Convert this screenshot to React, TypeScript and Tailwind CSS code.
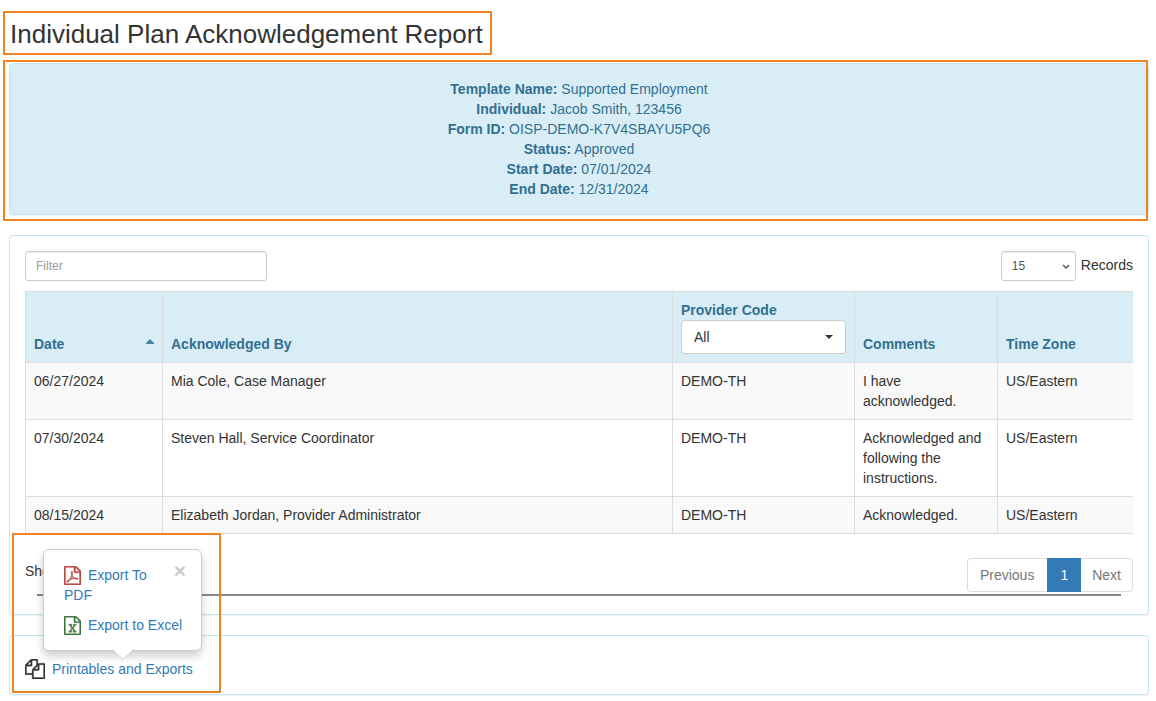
import type { ReactNode } from "react";

type Row = { date: string; by: string; code: string; comment: string; zone: string };

const rows: Row[] = [
  { date: "06/27/2024", by: "Mia Cole, Case Manager", code: "DEMO-TH", comment: "I have acknowledged.", zone: "US/Eastern" },
  {
    date: "07/30/2024",
    by: "Steven Hall, Service Coordinator",
    code: "DEMO-TH",
    comment: "Acknowledged and following the instructions.",
    zone: "US/Eastern",
  },
  { date: "08/15/2024", by: "Elizabeth Jordan, Provider Administrator", code: "DEMO-TH", comment: "Acknowledged.", zone: "US/Eastern" },
];

const details: [string, string][] = [
  ["Template Name:", "Supported Employment"],
  ["Individual:", "Jacob Smith, 123456"],
  ["Form ID:", "OISP-DEMO-K7V4SBAYU5PQ6"],
  ["Status:", "Approved"],
  ["Start Date:", "07/01/2024"],
  ["End Date:", "12/31/2024"],
];

const sheet =
  "M1596 380q28 28 48 76t20 88v1152q0 40-28 68t-68 28h-1344q-40 0-68-28t-28-68v-1600q0-40 28-68t68-28h896q40 0 88 20t76 48zm-444-244v376h376q-10-29-22-41l-313-313q-12-12-41-22zm384 1528v-1024h-416q-40 0-68-28t-28-68v-416h-768v1536h1280z";

const fileIcon = "-my-1 mr-[3px] inline h-[19px] w-[17px] align-[-1px]";

function PdfIcon() {
  return (
    <svg viewBox="128 0 1536 1792" preserveAspectRatio="none" className={`text-[#b94a48] ${fileIcon}`} fill="currentColor" stroke="currentColor" strokeWidth="45" aria-hidden="true">
      <path
        d={
          sheet +
          "m-514-593q33 26 84 56 59-7 117-7 147 0 177 49 16 22 2 52 0 1-1 2l-2 2v1q-6 38-71 38-48 0-115-20t-130-53q-221 24-392 83-153 262-242 262-15 0-28-7l-24-12q-1-1-6-5-10-10-6-36 9-40 56-91.5t132-96.5q14-9 23 6 2 2 2 4 52-85 107-197 68-136 104-262-24-82-30.5-159.5t6.5-127.5q11-40 42-40h22q23 0 35 15 18 21 9 68-2 6-4 8 1 3 1 8v30q-2 123-14 192 55 164 146 238zm-576 411q52-24 137-158-51 40-87.5 84t-49.5 74zm398-920q-15 42-2 132 1-7 7-44 0-3 7-43 1-4 4-8-1-1-1-2-1-2-1-3-1-22-13-36 0 1-1 2v2zm-124 661q135-54 284-81-2-1-13-9.5t-16-13.5q-76-67-127-176-27 86-83 197-30 56-45 83zm646-16q-24-24-140-24 76 28 124 28 14 0 18-1 0-1-2-3z"
        }
      />
    </svg>
  );
}

function ExcelIcon() {
  return (
    <svg viewBox="128 0 1536 1792" preserveAspectRatio="none" className={`text-[#3c763d] ${fileIcon}`} fill="currentColor" stroke="currentColor" strokeWidth="30" aria-hidden="true">
      <path
        d={
          sheet +
          "m-979-234v106h281v-106h-75l103-161q5-7 10-16.5t7.5-13.5 3.5-4h2q1 4 5 10 2 4 4.5 7.5t6 8 6.5 8.5l107 161h-76v106h291v-106h-68l-192-273 195-282h67v-107h-279v107h74l-103 159q-4 7-10 16.5t-9 13.5l-2 3h-2q-1-4-5-10-6-11-17-23l-106-159h76v-107h-290v107h68l189 272-194 283h-68z"
        }
      />
    </svg>
  );
}

function CopyIcon() {
  return (
    <svg viewBox="0 0 1792 1792" className="size-5 shrink-0" fill="currentColor" stroke="currentColor" strokeWidth="30" aria-hidden="true">
      <path d="M1696 384q40 0 68 28t28 68v1216q0 40-28 68t-68 28h-960q-40 0-68-28t-28-68v-288h-544q-40 0-68-28t-28-68v-672q0-40 20-88t48-76l408-408q28-28 76-48t88-20h416q40 0 68 28t28 68v328q68-40 128-40h416zm-544 213l-299 299h299v-299zm-640-384l-299 299h299v-299zm196 647l316-316v-416h-384v416q0 40-28 68t-68 28h-416v640h512v-256q0-40 20-88t48-76zm956 804v-1152h-384v416q0 40-28 68t-68 28h-416v640h896z" />
    </svg>
  );
}

function Th({ children }: { children: ReactNode }) {
  return (
    <th scope="col" className="border-b border-l border-[#ddd] p-2 text-left align-bottom font-bold">
      {children}
    </th>
  );
}

function Td({ children }: { children: ReactNode }) {
  return <td className="border-b border-l border-[#ddd] p-2 align-top">{children}</td>;
}

const card = "rounded border border-[#bce8f1] shadow-[0_1px_1px_rgba(0,0,0,0.05)]";

export default function App() {
  return (
    <main className="bg-white pt-[11px] pr-[7px] pb-1.5 pl-[9px] font-['Liberation_Sans',Arial,sans-serif] text-sm leading-5 text-[#333]">
      <h1 className="-ml-1.5 w-fit border-2 border-[#f58220] pt-1.5 pr-[7px] pb-1 pl-[5px] text-[26px] leading-[30px]">
        Individual Plan Acknowledgement Report
      </h1>

      <section className={`relative mt-2 bg-[#d9edf7] py-[15px] text-center text-[#31708f] ${card}`}>
        {details.map(([label, value]) => (
          <p key={label}>
            <strong>{label}</strong> {value}
          </p>
        ))}
        <div className="pointer-events-none absolute -top-1 right-0 -bottom-[7px] -left-[7px] border-2 border-[#f58220]" />
      </section>

      <section className={`mt-5 p-[15px] ${card}`}>
        <div className="flex items-start justify-between">
          <input
            aria-label="Filter"
            placeholder="Filter"
            className="h-[30px] w-[242px] rounded-[3px] border border-[#ccc] px-2.5 text-xs shadow-[inset_0_1px_1px_rgba(0,0,0,0.075)] placeholder:text-[#999]"
          />
          <label className="flex items-center gap-[5px]">
            <span className="relative">
              <select className="block h-[30px] w-[75px] appearance-none rounded-[3px] border border-[#ccc] bg-white px-2.5 text-xs text-[#555] shadow-[inset_0_1px_1px_rgba(0,0,0,0.075)]">
                <option>15</option>
                <option>25</option>
                <option>50</option>
              </select>
              <svg viewBox="0 0 8 6" className="pointer-events-none absolute top-[13px] right-1.5 h-1.5 w-2" fill="none" stroke="#555" strokeWidth="1.5" aria-hidden="true">
                <path d="M1 1l3 3 3-3" />
              </svg>
            </span>
            <span className="-mt-0.5">Records</span>
          </label>
        </div>

        <table className="mt-2.5 w-full table-fixed border-separate border-spacing-0 border-t border-[#ddd]">
          <colgroup>
            <col className="w-[137px]" />
            <col />
            <col className="w-[182px]" />
            <col className="w-[143px]" />
            <col className="w-[136px]" />
          </colgroup>
          <thead className="bg-[#d9edf7] text-[#31708f]">
            <tr>
              <Th>
                <span className="flex items-center justify-between">
                  Date
                  <svg viewBox="0 0 8 5" className="mb-1.5 h-[5px] w-2" fill="#4a87a6" aria-hidden="true">
                    <path d="M4 0l4 4v1H0V4z" />
                  </svg>
                </span>
              </Th>
              <Th>Acknowledged By</Th>
              <Th>
                <label className="block">
                  Provider Code
                  <span className="relative block font-normal text-[#333]">
                    <select className="block h-[34px] w-full appearance-none rounded border border-[#ccc] bg-white px-3 text-sm">
                      <option>All</option>
                      <option>DEMO-TH</option>
                    </select>
                    <svg viewBox="0 0 8 4" className="pointer-events-none absolute top-[15px] right-[13px] h-1 w-2" fill="#333" aria-hidden="true">
                      <path d="M0 0h8L4 4z" />
                    </svg>
                  </span>
                </label>
              </Th>
              <Th>Comments</Th>
              <Th>Time Zone</Th>
            </tr>
          </thead>
          <tbody>
            {rows.map((r) => (
              <tr key={r.date} className="odd:bg-[#f9f9f9]">
                <Td>{r.date}</Td>
                <Td>{r.by}</Td>
                <Td>{r.code}</Td>
                <Td>{r.comment}</Td>
                <Td>{r.zone}</Td>
              </tr>
            ))}
          </tbody>
        </table>

        <div className="mt-6 flex items-start justify-between">
          <p className="pt-[3px]">Showing 1 to 3 of 3 entries</p>
          <nav aria-label="Pages" className="flex text-[#777]">
            <button className="h-[34px] rounded-l border border-r-0 border-[#ddd] pr-[13px] pl-3">Previous</button>
            <button className="h-[34px] bg-[#337ab7] px-[13px] text-white" aria-current="page">
              1
            </button>
            <button className="h-[34px] rounded-r border border-l-0 border-[#ddd] px-[11px]">Next</button>
          </nav>
        </div>
        <hr className="mx-3 mt-0.5 mb-[3px] border-t-2 border-[#888]" />
      </section>

      <section className={`mt-5 flex px-[15px] pt-[23px] pb-[15px] ${card}`}>
        <div className="relative">
          <a href="#exports" className="flex items-center gap-[7px] text-[#333]">
            <CopyIcon />
            <span className="text-[#337ab7]">Printables and Exports</span>
          </a>

          <div role="dialog" aria-label="Exports" className="absolute bottom-7 left-[18px] w-[159px] rounded-md border border-[#ccc] bg-white py-[15px] pr-[15px] pl-5 shadow-[0_5px_10px_rgba(0,0,0,0.2)]">
            <button aria-label="Close" className="float-right -mt-1 text-[21px] leading-5 font-bold text-[#ccc]">
              ×
            </button>
            <a href="#pdf" className="block text-[#337ab7]">
              <PdfIcon /> Export To PDF
            </a>
            <a href="#excel" className="mt-2.5 block whitespace-nowrap text-[#337ab7]">
              <ExcelIcon /> Export to Excel
            </a>
            <svg viewBox="0 0 22 11" className="absolute -bottom-2.5 left-[68px] h-[11px] w-[22px]" aria-hidden="true">
              <path d="M0 0h22L11 11z" fill="#fff" />
              <path d="M0 .5l11 10L22 .5" fill="none" stroke="#ccc" />
            </svg>
          </div>
          <div className="pointer-events-none absolute -right-7 -bottom-3.5 -left-[13px] h-40 border-2 border-[#f58220]" />
        </div>
      </section>
    </main>
  );
}
